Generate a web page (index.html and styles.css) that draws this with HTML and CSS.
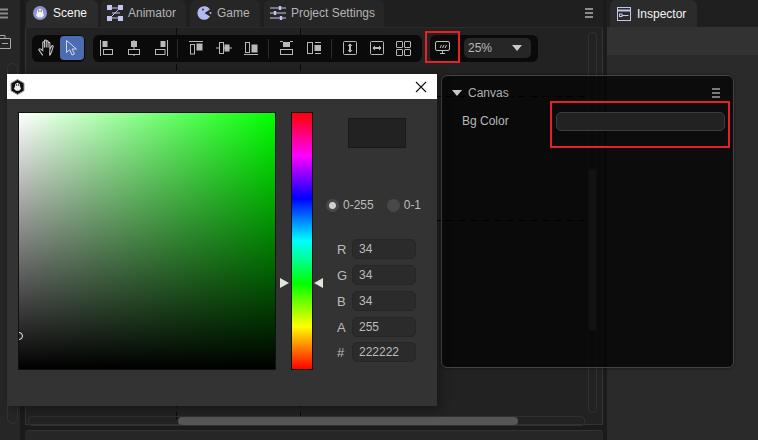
FILE: index.html
```html
<!DOCTYPE html>
<html lang="en">
<head>
  <meta charset="UTF-8" />
  <title>Canvas background color</title>
  <link rel="stylesheet" href="styles.css">
</head>
<body>
  <div class="editor">
    <aside class="side">
      <svg class="side-menu" width="9" height="11" viewBox="0 0 9 11"><path d="M0 1.5h8M0 5.5h8M0 9.5h8" stroke="#8a8a8a" stroke-width="2"/></svg>
      <svg class="side-folder" width="11" height="14" viewBox="0 0 11 14" fill="none" stroke="#a8a8a8"><path d="M0 3.5h10.5v10H0M0 .5h5v3M2 8.5h6"/></svg>
      <div class="side-track"></div>
    </aside>

    <main class="scene">
      <div class="tabs">
        <div class="tab tab-active tab-scene">
          <svg width="16" height="16" viewBox="0 0 16 16"><circle cx="8" cy="8" r="7" fill="#8f93d6"/><path d="M8 3.5l3 2v2l1 3-2 2H6l-2-2 1-3v-2z" fill="#f0f0f8"/><circle cx="6.8" cy="6" r=".8" fill="#555"/><circle cx="9.2" cy="6" r=".8" fill="#555"/></svg>
          <span>Scene</span>
        </div>
        <div class="tab tab-animator">
          <svg width="16" height="16" viewBox="0 0 16 16" fill="none" stroke="#c3c6ee"><path d="M3 3h10M3 13h10M13 3L3 13M5 8h8"/><rect x="0.5" y="0.5" width="4" height="4" fill="#c3c6ee"/><rect x="11.5" y="0.5" width="4" height="4" fill="#c3c6ee"/><rect x="0.5" y="11.5" width="4" height="4" fill="#c3c6ee"/><rect x="11.5" y="11.5" width="4" height="4" fill="#c3c6ee"/></svg>
          <span>Animator</span>
        </div>
        <div class="tab tab-game">
          <svg width="16" height="16" viewBox="0 0 16 16"><path d="M14 4.5A6.8 6.8 0 1 0 14 11.5L8.5 8z" fill="#b4b9f2"/><circle cx="14.5" cy="8" r="1" fill="#b4b9f2"/><circle cx="7" cy="4.5" r="1" fill="#333"/></svg>
          <span>Game</span>
        </div>
        <div class="tab tab-settings">
          <svg width="16" height="16" viewBox="0 0 16 16" fill="none" stroke="#c3c6ee" stroke-width="1.2"><path d="M0 3h16M0 8h16M0 13h16"/><path d="M10 1v4M5 6v4M11 11v4" stroke-width="2.4"/></svg>
          <span>Project Settings</span>
        </div>
        <svg class="tabs-menu" width="9" height="10" viewBox="0 0 9 10"><path d="M0 1h8M0 5h8M0 9h8" stroke="#8c8c8c" stroke-width="2"/></svg>
      </div>

      <div class="viewport">
        <i class="dash-v dash-a"></i>
        <i class="dash-v dash-b"></i>
        <i class="dash-h dash-c"></i>
        <i class="dash-h dash-d"></i>

        <div class="toolbar">
          <div class="group group-mode">
            <button class="tool">
              <svg width="18" height="18" viewBox="0 0 17 17" fill="none" stroke="#c8c8c8"><path d="M4.5 15.5L1 10.5c-.6-1 .8-1.8 1.6-1L4.5 11V3.5c0-1.2 1.6-1.2 1.6 0V8M6.1 8V1.8c0-1.2 1.7-1.2 1.7 0V8M7.8 8V2.5c0-1.2 1.7-1.2 1.7 0V8M9.5 8V4c0-1.2 1.7-1.2 1.7 0v6M11.2 10l1.6-3.2c.6-1 1.9-.4 1.5.7L12.5 13l-1.5 2.500z"/></svg>
            </button>
            <button class="tool tool-on">
              <svg width="16" height="18" viewBox="0 0 16 18" fill="none" stroke="#d4d8ea"><path d="M2.5 1.5v12l3.2-2.8L8 16l2.4-1-2.3-5h4.4z"/></svg>
            </button>
          </div>

          <div class="group group-align">
            <button class="tool"><svg width="14" height="16" viewBox="0 0 14 16" fill="none" stroke="#b8b8b8"><path d="M.5 0v16"/><rect x="3" y="1.5" width="4" height="5" fill="#b8b8b8"/><rect x="3.5" y="9.5" width="9" height="5"/></svg></button>
            <button class="tool"><svg width="14" height="16" viewBox="0 0 14 16" fill="none" stroke="#b8b8b8"><path d="M7 0v16"/><rect x="4.5" y="1.5" width="5" height="5" fill="#b8b8b8"/><rect x="1.5" y="9.5" width="11" height="5" fill="#0a0a0a"/></svg></button>
            <button class="tool"><svg width="14" height="16" viewBox="0 0 14 16" fill="none" stroke="#b8b8b8"><path d="M13.5 0v16"/><rect x="7" y="1.5" width="4" height="5" fill="#b8b8b8"/><rect x="1.5" y="9.5" width="9.5" height="5"/></svg></button>
            <i class="sep sep-a"></i>
            <button class="tool shift-left"><svg width="14" height="14" viewBox="0 0 14 14" fill="none" stroke="#b8b8b8"><path d="M0 .5h14"/><rect x="1.5" y="3.5" width="4" height="9.500"/><rect x="8" y="3" width="5" height="6" fill="#b8b8b8"/></svg></button>
            <button class="tool"><svg width="16" height="14" viewBox="0 0 16 14" fill="none" stroke="#b8b8b8"><path d="M0 7h16"/><rect x="3.500" y="1.500" width="4" height="11" fill="#0a0a0a"/><rect x="9" y="4" width="4" height="6" fill="#b8b8b8"/></svg></button>
            <button class="tool"><svg width="14" height="14" viewBox="0 0 14 14" fill="none" stroke="#b8b8b8"><path d="M0 13.500h14"/><rect x="1.500" y="1.500" width="4" height="10"/><rect x="8" y="4" width="5" height="7" fill="#b8b8b8"/></svg></button>
            <i class="sep sep-b"></i>
            <button class="tool"><svg width="13" height="14" viewBox="0 0 13 14" fill="none" stroke="#b8b8b8"><path d="M0 .500h3M10 .500h3"/><rect x="3.500" y="1.500" width="6" height="4" fill="#b8b8b8"/><rect x=".5" y="8.500" width="12" height="5"/></svg></button>
            <button class="tool"><svg width="14" height="12" viewBox="0 0 14 12" fill="none" stroke="#b8b8b8"><rect x=".5" y=".5" width="5" height="11"/><path d="M8 .5h6M8 11.500h6"/><rect x="8" y="3.500" width="5.500" height="5" fill="#b8b8b8"/></svg></button>
            <i class="sep sep-c"></i>
            <button class="tool"><svg width="14" height="14" viewBox="0 0 14 14" fill="none" stroke="#b8b8b8"><rect x=".5" y=".5" width="13" height="13" rx="1"/><path d="M7 3v8" stroke-width="2"/><path d="M4.500 5L7 2.500 9.500 5zM4.500 9L7 11.500 9.500 9z" fill="#b8b8b8" stroke="none"/></svg></button>
            <button class="tool"><svg width="14" height="14" viewBox="0 0 14 14" fill="none" stroke="#b8b8b8"><rect x=".5" y=".5" width="13" height="13" rx="1"/><path d="M3 7h8" stroke-width="2"/><path d="M5 4.500L2.500 7 5 9.500zM9 4.500L11.500 7 9 9.500z" fill="#b8b8b8" stroke="none"/></svg></button>
            <button class="tool"><svg width="15" height="15" viewBox="0 0 15 15" fill="none" stroke="#b8b8b8"><rect x=".5" y=".5" width="6" height="6" rx=".5"/><rect x="8.500" y=".5" width="6" height="6" rx=".5"/><rect x=".5" y="8.500" width="6" height="6" rx=".5"/><rect x="8.500" y="8.500" width="6" height="6" rx=".5"/></svg></button>
          </div>

          <div class="group group-view">
            <button class="tool tool-screen"><svg width="15" height="14" viewBox="0 0 15 14" fill="none" stroke="#c0c0c0"><rect x=".5" y=".5" width="14" height="9" rx="1.500"/><path d="M5 12.500h5M7.500 10v2.500M5 7l1.500-3M7.500 7L9 4M10 7l1.500-3"/></svg></button>
            <div class="zoom-select"><span>25%</span><i class="caret"></i></div>
          </div>
        </div>

        <div class="track-v"><div class="thumb-v"></div></div>
        <div class="track-h"><div class="thumb-h"></div></div>
      </div>
      <div class="scene-next"></div>
    </main>

    <aside class="inspector">
      <div class="tabs tabs-inspector">
        <div class="tab tab-active">
          <svg width="14" height="14" viewBox="0 0 14 14" fill="none" stroke="#c3c6ee"><rect x=".5" y=".5" width="13" height="13"/><path d="M.5 3.500h13" stroke-width="2"/><rect x="2.500" y="7" width="2.500" height="2.500"/><path d="M5 8.500h6.500"/></svg>
          <span>Inspector</span>
        </div>
      </div>
      <div class="inspector-head"></div>
    </aside>
  </div>

  <section class="canvas-panel">
    <header class="panel-head">
      <i class="caret caret-head"></i>
      <span>Canvas</span>
      <svg class="panel-menu" width="8" height="10" viewBox="0 0 8 10"><path d="M0 1h8M0 5h8M0 9h8" stroke="#a0a0a0" stroke-width="1.600"/></svg>
    </header>
    <div class="panel-row">
      <label>Bg Color</label>
      <div class="color-field"></div>
    </div>
  </section>

  <div class="mark mark-screen"></div>
  <div class="mark mark-field"></div>

  <section class="picker">
    <header class="picker-title">
      <svg width="15" height="16" viewBox="0 0 15 16"><path d="M7.500 .5l6.500 3.700v7.600l-6.500 3.700L1 11.800V4.200z" fill="#111" stroke="#999"/><path d="M7.500 3.800l2.500 1.500v2l1 2.500-2 2H6l-2-2 1-2.500v-2z" fill="#eee"/><circle cx="6.400" cy="6" r=".8" fill="#111"/><circle cx="8.600" cy="6" r=".8" fill="#111"/></svg>
      <svg class="picker-close" width="12" height="12" viewBox="0 0 12 12"><path d="M1 1l10 10M11 1L1 11" stroke="#111" stroke-width="1.100"/></svg>
    </header>
    <div class="picker-body">
      <div class="sv-box"><i class="sv-dot"></i></div>
      <div class="hue-col">
        <i class="hue-arrow hue-left"></i>
        <div class="hue-bar"></div>
        <i class="hue-arrow hue-right"></i>
      </div>
      <div class="values">
        <div class="preview"></div>
        <div class="modes">
          <span class="radio radio-on"></span><span class="mode-text">0-255</span>
          <span class="radio radio-off"></span><span class="mode-text">0-1</span>
        </div>
        <div class="fields">
          <div class="field"><label>R</label><div class="val">34</div></div>
          <div class="field"><label>G</label><div class="val">34</div></div>
          <div class="field"><label>B</label><div class="val">34</div></div>
          <div class="field"><label>A</label><div class="val">255</div></div>
          <div class="field"><label>#</label><div class="val">222222</div></div>
        </div>
      </div>
    </div>
  </section>
</body>
</html>
```

FILE: styles.css
```css
* { box-sizing: border-box; }
html, body {
  margin: 0;
  padding: 0;
  height: 440px;
  overflow: hidden;
}
body {
  font-family: "Liberation Sans", Arial, sans-serif;
  font-size: 12px;
  color: #c4c4c4;
  background: #1b1b1b;
  position: relative;
}
button {
  border: none;
  background: none;
  padding: 0;
}

.editor {
  display: flex;
  height: 440px;
}

/* left strip */
.side {
  width: 20px;
  background: #262626;
  margin-right: 5px;
  display: flex;
  flex-direction: column;
  position: relative;
}
.side-menu { margin-top: 8px; }
.side-folder { margin-top: 16px; }
.side-track {
  margin: 14px 0 0 7px;
  width: 11px;
  height: 361px;
  border: 1px solid #333;
  border-radius: 5px;
}

/* scene */
.scene {
  width: 578px;
  display: flex;
  flex-direction: column;
}
.tabs {
  height: 27px;
  display: flex;
  gap: 3px;
  background: #1f1f1f;
  position: relative;
}
.tab {
  display: flex;
  align-items: center;
  gap: 5px;
  padding-left: 6px;
  background: #262626;
  border-radius: 6px 6px 0 0;
  color: #b4b4b4;
}
.tab-active {
  background: #2b2b2b;
  color: #f4f4f4;
}
.tab-scene { width: 72px; margin-left: 1px; }
.tab-animator { width: 85px; margin-left: 0; }
.tab-game { width: 70px; margin-left: 1px; }
.tab-settings { width: 120px; margin-left: 1px; }
.tabs-menu { position: absolute; right: 9px; top: 8px; }

.viewport {
  height: 404px;
  background: #222;
  border: 1px solid #333;
  border-top-color: #2a2a2a;
  position: relative;
}
.scene-next {
  margin-top: 5px;
  height: 10px;
  background: #262626;
  border-top: 1px solid #333;
  border-radius: 4px 4px 0 0;
}

.dash-v, .dash-h { position: absolute; display: block; }
.dash-v {
  top: 0;
  bottom: 0;
  width: 1px;
  background: repeating-linear-gradient(to bottom, #0a0a0a 0 7px, transparent 7px 12px);
}
.dash-a { left: 150px; }
.dash-b { left: 274px; }
.dash-h {
  height: 1px;
  left: 0;
  width: 560px;
  background: repeating-linear-gradient(to right, #000 0 7px, transparent 7px 12px);
}
.dash-c { top: 68px; }
.dash-d { top: 192px; }

.toolbar {
  display: flex;
  gap: 8px;
  padding: 7px 0 0 6px;
  position: relative;
}
.group {
  height: 27px;
  background: #0a0a0a;
  border-radius: 6px;
  display: flex;
  align-items: center;
}
.tool {
  width: 27px;
  height: 24px;
  display: flex;
  align-items: center;
  justify-content: center;
  flex: none;
}
.group-mode {
  width: 53px;
  padding-left: 1px;
  gap: 0;
}
.tool-on {
  background: #4b6cb0;
  border-radius: 4px;
  width: 24px;
}
.group-align { padding-right: 5px; }
.sep {
  width: 1px;
  height: 19px;
  background: #2c2c2c;
  flex: none;
}
.sep-a { margin: 0 5px 0 3px; }
.sep-b { margin: 0 4px; }
.sep-c { margin: 0 4px 0 4px; }
.group-view { padding-right: 7px; }
.tool-screen { width: 25px; }
.zoom-select {
  width: 67px;
  height: 20px;
  margin-left: 9px;
  padding: 0 9px 0 4px;
  background: #262626;
  border-radius: 5px;
  font-size: 12px;
  color: #b8b8b8;
  display: flex;
  align-items: center;
  justify-content: space-between;
}
.caret {
  width: 0;
  height: 0;
  border-left: 5.5px solid transparent;
  border-right: 5.5px solid transparent;
  border-top: 6px solid #c8c8c8;
}

.track-v {
  position: absolute;
  left: 562px;
  top: 4px;
  width: 9px;
  height: 381px;
  border: 1px solid #303030;
  border-radius: 4px;
}
.thumb-v {
  margin: 136px 0 0 0;
  height: 162px;
  background: #3e3e3e;
  border-radius: 4px;
}
.track-h {
  position: absolute;
  left: 2px;
  top: 388px;
  width: 557px;
  height: 10px;
  border: 1px solid #303030;
  border-radius: 4px;
  display: flex;
}
.thumb-h {
  margin-left: 149px;
  width: 340px;
  background: #565656;
  border-radius: 4px;
}

/* inspector */
.inspector {
  margin-left: 4px;
  width: 151px;
  background: #2a2a2a;
}
.tabs-inspector { padding-left: 3px; }
.tabs-inspector .tab { width: 87px; gap: 6px; padding-left: 7px; }
.inspector-head {
  height: 28px;
  background: #323232;
}

/* overlays */
.canvas-panel {
  position: absolute;
  left: 441px;
  top: 75px;
  width: 293px;
  height: 293px;
  background: rgba(0, 0, 0, 0.7);
  border: 1px solid #444;
  border-radius: 6px;
  box-shadow: 0 0 3px rgba(0, 0, 0, 0.5);
  padding: 0 0 0 10px;
}
.panel-head {
  height: 33px;
  display: flex;
  align-items: center;
  gap: 6px;
  padding-top: 1px;
  color: #b0b0b0;
}
.caret-head { flex: none; }
.panel-menu { margin-left: auto; margin-right: 13px; }
.panel-row {
  display: flex;
  align-items: center;
  height: 18px;
  margin-top: 3px;
  padding-left: 10px;
}
.panel-row label { width: 94px; color: #b8b8b8; }
.color-field {
  width: 169px;
  height: 19px;
  background: #222;
  border: 1px solid #3c3c3c;
  border-radius: 5px;
}

.mark {
  position: absolute;
  border: 2px solid #e8202a;
}
.mark-screen { left: 425px; top: 31px; width: 35px; height: 32px; }
.mark-field { left: 550px; top: 101px; width: 180px; height: 47px; }

.picker {
  position: absolute;
  left: 7px;
  top: 74px;
  width: 430px;
  height: 332px;
  background: #333;
  box-shadow: 3px 3px 10px rgba(0, 0, 0, 0.35);
}
.picker-title {
  height: 25px;
  background: #fff;
  display: flex;
  align-items: center;
  justify-content: space-between;
  padding: 0 10px 0 3px;
}
.picker-body {
  display: flex;
  padding: 13px 0 0 11px;
}
.sv-box {
  width: 258px;
  height: 258px;
  border: 1px solid #111;
  background: linear-gradient(to top, #000, rgba(0, 0, 0, 0)), linear-gradient(to right, #fff, #0f0);
  position: relative;
  overflow: hidden;
}
.sv-dot {
  position: absolute;
  left: -4px;
  bottom: 29px;
  width: 8px;
  height: 8px;
  border: 1px solid #eee;
  border-radius: 50%;
}
.hue-col {
  display: flex;
  align-items: flex-start;
  width: 50px;
  margin-left: 2px;
  position: relative;
}
.hue-bar {
  width: 22px;
  height: 258px;
  margin: 0 0 0 13px;
  border: 1px solid #111;
  background: linear-gradient(to bottom, #f00, #f0f 16.66%, #00f 33.33%, #0ff 50%, #0f0 66.66%, #ff0 83.33%, #f00);
}
.hue-arrow {
  position: absolute;
  top: 166px;
  width: 0;
  height: 0;
  border-top: 5px solid transparent;
  border-bottom: 5px solid transparent;
}
.hue-left { left: 2px; border-left: 9px solid #e4e4d8; }
.hue-right { left: 36px; border-right: 9px solid #e4e4d8; }
.values {
  margin-left: 3px;
  width: 100px;
}
.preview {
  width: 58px;
  height: 30px;
  margin: 6px 0 0 17px;
  background: #222;
  border: 1px solid #1a1a1a;
}
.modes {
  display: flex;
  align-items: center;
  margin-top: 49px;
  height: 16px;
}
.radio {
  width: 13px;
  height: 13px;
  border-radius: 50%;
  background: #484848;
  margin-left: -5px;
  flex: none;
}
.radio-on { background: radial-gradient(circle, #cfcfcf 0, #cfcfcf 3px, #484848 4px); }
.radio-off { margin-left: 13px; }
.mode-text { margin-left: 4px; color: #bcbcbc; }
.fields {
  margin-top: 26px;
  display: flex;
  flex-direction: column;
  gap: 6px;
}
.field {
  display: flex;
  align-items: center;
  height: 20px;
}
.field:last-child { margin-top: -1px; }
.field label {
  width: 15px;
  margin-left: 6px;
  font-size: 13px;
  color: #bcbcbc;
}
.val {
  width: 64px;
  height: 20px;
  line-height: 18px;
  padding-left: 6px;
  background: #2b2b2b;
  border: 1px solid #262626;
  border-radius: 5px;
  color: #bcbcbc;
}
.shift-left { margin-left: -1px; margin-right: 1px; }
```
